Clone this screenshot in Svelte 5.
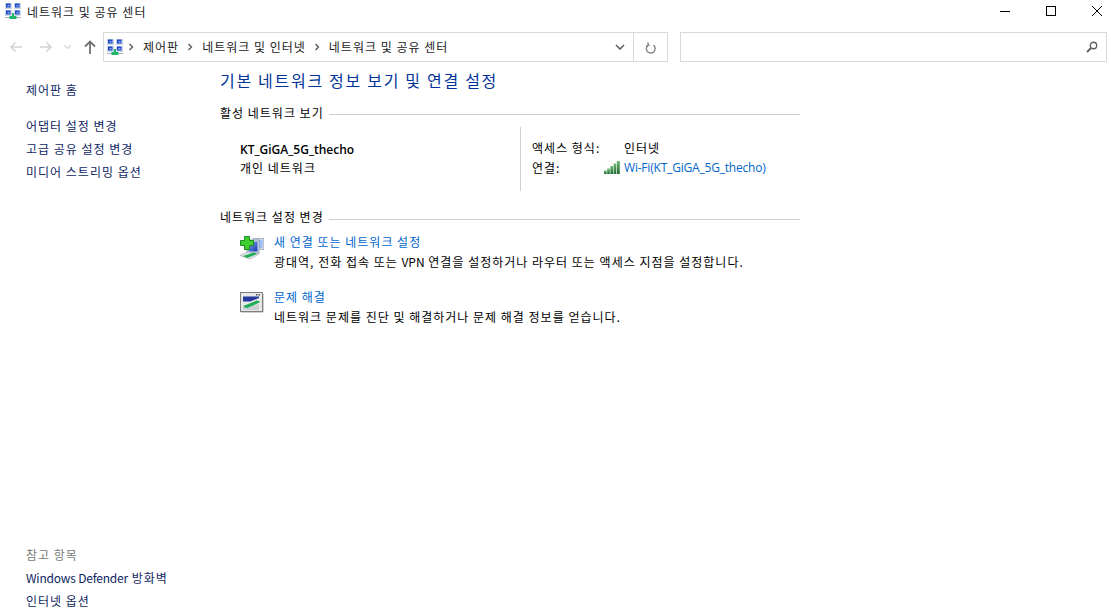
<script>
	const topLinks = ['어댑터 설정 변경', '고급 공유 설정 변경', '미디어 스트리밍 옵션'];
	const crumbs = ['제어판', '네트워크 및 인터넷', '네트워크 및 공유 센터'];
</script>

{#snippet netIcon()}
	<svg class="net-icon" width="16" height="16" viewBox="0 0 16 16">
		<rect x="0" y="0" width="7" height="6" fill="#cdd6e6" />
		<rect x="9" y="0" width="7" height="6" fill="#cdd6e6" />
		<rect x="1" y="0.5" width="4.5" height="4" fill="#1c46c8" />
		<rect x="10" y="0.5" width="4.5" height="4" fill="#1c46c8" />
		<rect x="2.5" y="2" width="2" height="1.5" fill="#8fb4f0" />
		<rect x="11.5" y="2" width="2" height="1.5" fill="#8fb4f0" />
		<rect x="0" y="7" width="7" height="6" fill="#cdd6e6" />
		<rect x="9" y="7" width="7" height="6" fill="#cdd6e6" />
		<rect x="1" y="7.5" width="4.5" height="4" fill="#1c46c8" />
		<rect x="10" y="7.5" width="4.5" height="4" fill="#1c46c8" />
		<rect x="2.5" y="9" width="2" height="1.5" fill="#8fb4f0" />
		<rect x="11.5" y="9" width="2" height="1.5" fill="#8fb4f0" />
		<rect x="7" y="10" width="2" height="3" fill="#1fb56a" />
		<rect x="0" y="14" width="16" height="1" fill="#a9afb6" />
		<rect x="4.5" y="13" width="7" height="3" fill="#1fb56a" />
	</svg>
{/snippet}

{#snippet chevron()}
	<svg class="sep" width="6" height="8" viewBox="0 0 6 8">
		<path d="M1.5 1 L4.5 4 L1.5 7" fill="none" stroke="#555" stroke-width="1.3" />
	</svg>
{/snippet}

<div class="window">
	<header class="titlebar">
		<div class="title">
			{@render netIcon()}
			<span>네트워크 및 공유 센터</span>
		</div>
		<div class="caption">
			<span class="cap-btn">
				<svg width="10" height="10" viewBox="0 0 10 10"><path d="M0 5.5 H10" stroke="#000" stroke-width="1" /></svg>
			</span>
			<span class="cap-btn">
				<svg width="10" height="10" viewBox="0 0 10 10"><rect x="0.5" y="0.5" width="9" height="9" fill="none" stroke="#000" /></svg>
			</span>
			<span class="cap-btn">
				<svg width="10" height="10" viewBox="0 0 10 10"><path d="M0 0 L10 10 M10 0 L0 10" stroke="#000" stroke-width="1" /></svg>
			</span>
		</div>
	</header>

	<nav class="toolbar">
		<div class="nav-btns">
			<svg width="14" height="12" viewBox="0 0 14 12"><path d="M13 6 H2 M6.5 1.5 L2 6 L6.5 10.5" fill="none" stroke="#d4d4d4" stroke-width="1.6" /></svg>
			<svg width="14" height="12" viewBox="0 0 14 12"><path d="M1 6 H12 M7.5 1.5 L12 6 L7.5 10.5" fill="none" stroke="#d4d4d4" stroke-width="1.6" /></svg>
			<svg class="drop" width="7" height="5" viewBox="0 0 7 5"><path d="M0.5 0.5 L3.5 3.5 L6.5 0.5" fill="none" stroke="#d4d4d4" stroke-width="1.2" /></svg>
			<svg class="up" width="12" height="14" viewBox="0 0 12 14"><path d="M6 14 V2 M1 6.5 L6 1.5 L11 6.5" fill="none" stroke="#707070" stroke-width="1.8" /></svg>
		</div>
		<div class="address">
			<div class="crumbs">
				{@render netIcon()}
				{#each crumbs as crumb}
					{@render chevron()}
					<span>{crumb}</span>
				{/each}
			</div>
			<svg class="addr-drop" width="10" height="6" viewBox="0 0 10 6"><path d="M1 1 L5 5 L9 1" fill="none" stroke="#606060" stroke-width="1.6" /></svg>
			<div class="refresh">
				<svg width="12" height="13" viewBox="0 0 12 13"><path d="M8.4 3.2 A4.4 4.4 0 1 1 3.4 3 M2.6 0.6 L3.8 3.2 L1 4" transform="translate(0 1)" fill="none" stroke="#8a8a8a" stroke-width="1.5" /></svg>
			</div>
		</div>
		<div class="search">
			<svg width="12" height="12" viewBox="0 0 12 12"><circle cx="7.5" cy="4.5" r="3.2" fill="none" stroke="#606060" stroke-width="1.4" /><path d="M5 7 L1 11" stroke="#606060" stroke-width="1.8" /></svg>
		</div>
	</nav>

	<div class="body">
		<aside class="sidebar">
			<div class="side-top">
				<span class="side-link home">제어판 홈</span>
				{#each topLinks as link}
					<span class="side-link">{link}</span>
				{/each}
			</div>
			<div class="side-bottom">
				<span class="see-also">참고 항목</span>
				<span class="side-link"><span class="latin defender">Windows Defender</span> 방화벽</span>
				<span class="side-link">인터넷 옵션</span>
			</div>
		</aside>

		<main class="content">
			<h1>기본 네트워크 정보 보기 및 연결 설정</h1>

			<div class="section-head"><span>활성 네트워크 보기</span><i></i></div>
			<div class="active">
				<div class="net-name">
					<strong>KT_GiGA_5G_thecho</strong>
					<span>개인 네트워크</span>
				</div>
				<div class="net-info">
					<div class="info-row">
						<span class="info-label wide">액세스 형식:</span>
						<span>인터넷</span>
					</div>
					<div class="info-row">
						<span class="info-label">연결:</span>
						<svg class="wifi" width="17" height="13" viewBox="0 0 17 13">
							<defs>
								<linearGradient id="bar" x1="0" y1="0" x2="0" y2="1">
									<stop offset="0" stop-color="#6fb878" />
									<stop offset="1" stop-color="#1f6b2e" />
								</linearGradient>
							</defs>
							<rect x="0" y="9.5" width="2.6" height="3.5" fill="url(#bar)" />
							<rect x="3.2" y="7.5" width="2.6" height="5.5" fill="url(#bar)" />
							<rect x="6.4" y="5" width="2.6" height="8" fill="url(#bar)" />
							<rect x="9.6" y="2.5" width="2.6" height="10.5" fill="url(#bar)" />
							<rect x="12.8" y="0" width="3" height="13" fill="url(#bar)" />
						</svg>
						<span class="info-link">Wi-Fi(KT_GiGA_5G_thecho)</span>
					</div>
				</div>
			</div>

			<div class="section-head second"><span>네트워크 설정 변경</span><i></i></div>
			<div class="task first">
				<svg class="task-icon" width="24" height="24" viewBox="0 0 24 24">
					<defs>
						<linearGradient id="scr" x1="0" y1="0" x2="1" y2="1">
							<stop offset="0" stop-color="#8fb0f2" />
							<stop offset="1" stop-color="#0f2fb0" />
						</linearGradient>
					</defs>
					<rect x="13" y="2.5" width="11" height="11" fill="#cfd9e8" stroke="#9aa9bd" stroke-width="0.8" />
					<rect x="14.5" y="4" width="8" height="8" fill="#9dbcf0" />
					<rect x="7" y="4" width="12" height="13" fill="#dfe6f0" stroke="#7f90a8" stroke-width="0.8" />
					<rect x="8.5" y="5.5" width="9" height="10" fill="url(#scr)" />
					<path d="M0 19.5 L8 16 L19 18 L10 23 Z" fill="#e4e6ea" stroke="#9aa2ac" stroke-width="0.6" />
					<path d="M3 20 L14 16.5 L17 18 L7 22 Z" fill="#1fae56" />
					<path d="M4.5 0.5 H9.5 V4.5 H13.5 V9.5 H9.5 V13.5 H4.5 V9.5 H0.5 V4.5 H4.5 Z" fill="#3fd02f" stroke="#1c8a22" stroke-width="1" />
				</svg>
				<div class="task-text">
					<span class="task-title">새 연결 또는 네트워크 설정</span>
					<span>광대역, 전화 접속 또는 <span class="latin">VPN</span> 연결을 설정하거나 라우터 또는 액세스 지점을 설정합니다.</span>
				</div>
			</div>
			<div class="task second-task">
				<svg class="task-icon" width="24" height="21" viewBox="0 0 24 21">
					<rect x="0.5" y="0.5" width="22" height="19" fill="#e8e8e8" stroke="#7d7d7d" />
					<rect x="23" y="2" width="1" height="18" fill="#d0d0d0" />
					<rect x="1" y="20" width="22" height="1" fill="#d0d0d0" />
					<rect x="16" y="2" width="1.5" height="1.5" fill="#555" />
					<rect x="18.5" y="2" width="1.5" height="1.5" fill="#555" />
					<path d="M3 4.5 H19 V6 L10 9.5 H3 Z" fill="#23379c" />
					<path d="M3 15 L17 8.5 L20 10 L7 16.5 Z" fill="#22ad5a" />
					<path d="M3 15.5 H8 L19 12 V18 H3 Z" fill="#c9cfd3" />
					<path d="M3 14 L17 8.5 L20 10 L7 16 Z" fill="#22ad5a" />
				</svg>
				<div class="task-text">
					<span class="task-title">문제 해결</span>
					<span>네트워크 문제를 진단 및 해결하거나 문제 해결 정보를 얻습니다.</span>
				</div>
			</div>
		</main>
	</div>
</div>

<style>
	:global(body) {
		margin: 0;
		background: #fff;
	}

	.window {
		display: flex;
		flex-direction: column;
		width: 1111px;
		height: 615px;
		overflow: hidden;
		font-family: 'Noto Sans CJK KR', 'Noto Sans', sans-serif;
		font-size: 12px;
		letter-spacing: 1px;
		color: #000;
	}

	.latin {
		letter-spacing: 0;
	}

	.defender {
		letter-spacing: -0.2px;
	}

	.net-icon {
		flex: none;
		display: block;
	}

	.titlebar {
		display: flex;
		justify-content: space-between;
		height: 32px;
		flex: none;
	}

	.title {
		display: flex;
		align-items: center;
		gap: 6px;
		padding: 0 0 10px 5px;
		color: #222;
	}

	.caption {
		display: flex;
		margin-right: -9px;
	}

	.cap-btn {
		display: flex;
		align-items: center;
		justify-content: center;
		width: 46px;
		height: 22px;
	}

	.toolbar {
		display: flex;
		height: 30px;
		flex: none;
		padding-right: 4px;
	}

	.nav-btns {
		display: flex;
		align-items: center;
		width: 103px;
		padding-left: 9px;
		box-sizing: border-box;
	}

	.nav-btns svg + svg {
		margin-left: 16px;
	}

	.nav-btns .drop {
		margin-left: 11px;
	}

	.nav-btns .up {
		margin-left: 13px;
	}

	.address {
		display: flex;
		align-items: center;
		width: 565px;
		box-sizing: border-box;
		border: 1px solid #d9d9d9;
		margin-right: 12px;
	}

	.crumbs {
		flex: 1;
		display: flex;
		align-items: center;
		padding: 0 0 2px 3px;
		color: #222;
	}

	.crumbs span {
		margin: 0 8px 0 9px;
	}

	.crumbs .sep {
		margin-top: 2px;
	}

	.crumbs .net-icon + .sep {
		margin-left: 5px;
	}

	.crumbs .net-icon {
		margin-top: 2px;
	}

	.addr-drop {
		margin-right: 8px;
	}

	.refresh {
		display: flex;
		align-items: center;
		justify-content: center;
		width: 33px;
		height: 100%;
		border-left: 1px solid #d9d9d9;
	}

	.search {
		flex: 1;
		display: flex;
		align-items: center;
		justify-content: flex-end;
		padding-right: 8px;
		border: 1px solid #d9d9d9;
	}

	.body {
		flex: 1;
		display: flex;
		min-height: 0;
	}

	.sidebar {
		display: flex;
		flex-direction: column;
		justify-content: space-between;
		width: 220px;
		flex: none;
		box-sizing: border-box;
		padding: 19px 0 5px 26px;
	}

	.side-top,
	.side-bottom {
		display: flex;
		flex-direction: column;
		gap: 5px;
	}

	.side-link,
	.see-also {
		line-height: 18px;
		color: #0f1f63;
	}

	.home {
		margin-bottom: 13px;
	}

	.see-also {
		color: #7a7a7a;
	}

	.content {
		flex: 1;
		padding-top: 7px;
	}

	h1 {
		margin: 0;
		font-size: 16px;
		font-weight: 400;
		letter-spacing: 1.7px;
		line-height: 22px;
		color: #003399;
	}

	.section-head {
		display: flex;
		align-items: center;
		gap: 5px;
		width: 580px;
		margin-top: 13px;
		line-height: 18px;
	}

	.section-head i {
		flex: 1;
		height: 1px;
		background: #cfcfcf;
		margin-top: 3px;
	}

	.section-head.second {
		margin-top: 17px;
	}

	.section-head.second i {
		margin-top: 5px;
	}

	.active {
		display: flex;
		width: 580px;
		height: 64px;
		margin-top: 5px;
	}

	.net-name {
		display: flex;
		flex-direction: column;
		width: 300px;
		box-sizing: border-box;
		padding: 14px 0 0 20px;
		line-height: 18px;
	}

	.net-name strong {
		font-family: 'Open Sans', 'Noto Sans CJK KR', sans-serif;
		font-weight: 600;
		letter-spacing: 0;
	}

	.net-info {
		border-left: 1px solid #cfcfcf;
		padding: 10px 0 0 11px;
	}

	.info-row {
		display: flex;
		align-items: center;
		height: 20px;
	}

	.info-label {
		width: 72px;
	}

	.info-label.wide {
		width: 92px;
	}

	.wifi {
		margin-right: 3px;
	}

	.info-link {
		color: #0066cc;
		font-family: 'Open Sans', 'Noto Sans CJK KR', sans-serif;
		letter-spacing: -0.2px;
	}

	.task {
		display: flex;
		gap: 10px;
		margin-left: 20px;
	}

	.task.first {
		margin-top: 7px;
	}

	.task.first .task-icon {
		margin-top: 3px;
	}

	.task.second-task {
		margin-top: 17px;
	}

	.second-task .task-icon {
		margin-top: 4px;
	}

	.task-icon {
		flex: none;
	}

	.task-text {
		display: flex;
		flex-direction: column;
		gap: 2px;
		line-height: 18px;
	}

	.task-title {
		color: #0066cc;
	}
</style>
